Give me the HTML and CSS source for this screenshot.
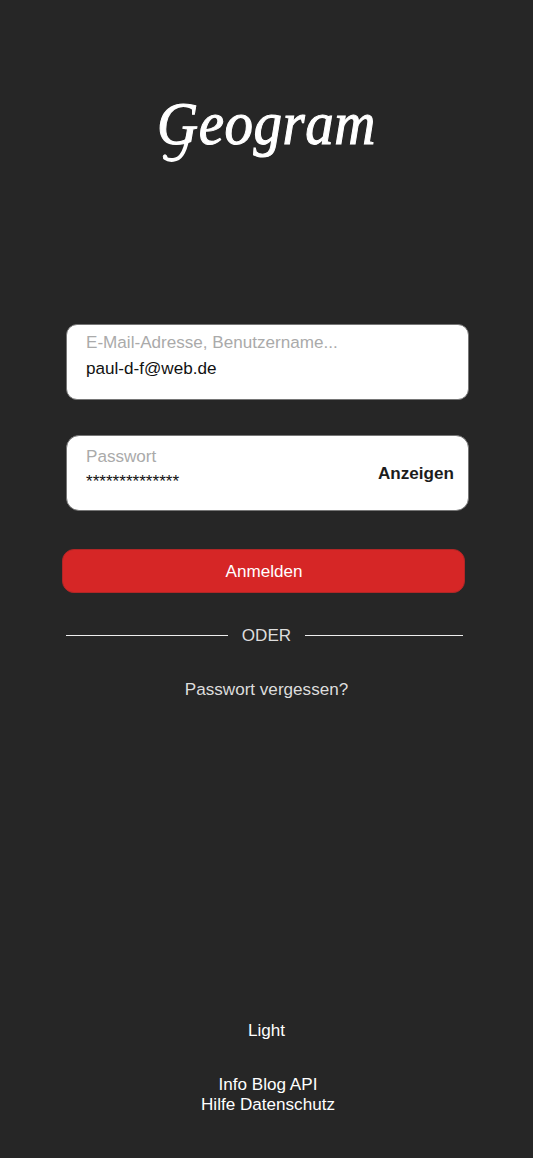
FILE: index.html
```html
<!DOCTYPE html>
<html lang="de">
<head>
<meta charset="utf-8">
<title>Geogram</title>
<link rel="stylesheet" href="styles.css">
</head>
<body>
<main class="login">
  <h1 class="logo"><span class="word">Geogram</span>
    <svg class="swash" width="40" height="40" viewBox="0 0 40 40" fill="none" stroke="#fff" stroke-linecap="round">
      <path d="M31 14C29.500 22 28.500 28 24.500 33C20.500 39 12 39 8 36" stroke-width="3.800"/>
      <circle cx="8" cy="34.500" r="1.700" fill="#fff"/>
    </svg>
  </h1>
  <form class="form">
    <div class="field">
      <div class="entry">
        <span class="label">E-Mail-Adresse, Benutzername...</span>
        <span class="value">paul-d-f@web.de</span>
      </div>
    </div>
    <div class="field password">
      <div class="entry">
        <span class="label">Passwort</span>
        <span class="value">**************</span>
      </div>
      <strong class="show">Anzeigen</strong>
    </div>
    <button class="submit" type="button">Anmelden</button>
    <div class="divider"><span class="line"></span><span class="or">ODER</span><span class="line right"></span></div>
    <a class="forgot">Passwort vergessen?</a>
  </form>
  <footer class="footer">
    <a class="theme">Light</a>
    <nav class="links">Info Blog API<br>Hilfe Datenschutz</nav>
  </footer>
</main>
</body>
</html>
```
FILE: styles.css
```css
* { box-sizing: border-box; }
body {
  margin: 0;
  background: #262626;
  color: #fff;
  font: 17.1px/20px "Liberation Sans", Arial, sans-serif;
}
.login {
  height: 1158px;
  display: flex;
  flex-direction: column;
  align-items: center;
}
.logo {
  position: relative;
  margin: 88px 0 0;
  height: 82px;
  width: 219px;
  font: italic 400 57px/72px "Monotype Corsiva", "Liberation Serif", serif;
  letter-spacing: 0.5px;
  white-space: nowrap;
}
.word {
  display: block;
  transform: scaleY(1.07);
  -webkit-text-stroke: 1px #fff;
}
/* Descending tail of the capital G */
.swash {
  position: absolute;
  left: 0;
  top: 34px;
}
.form {
  width: 403px;
  margin: 154px 0 0 2px;
  display: flex;
  flex-direction: column;
}
.field {
  height: 76px;
  border: 1px solid #767676;
  border-radius: 11px;
  background: #fff;
  padding: 8px 14px 0 19px;
  display: flex;
  justify-content: space-between;
}
.entry {
  display: flex;
  flex-direction: column;
  gap: 6px;
}
.label { color: #aaa; }
.value { color: #111; }
.password {
  margin-top: 35px;
  padding-top: 11px;
  border-radius: 13px;
}
.password .entry { gap: 5px; }
.show {
  margin-top: 17px;
  color: #1c1c1c;
}
.submit {
  width: 403px;
  height: 44px;
  margin: 38px 0 0 -4.5px;
  padding: 2px 0 0 2px;
  border: 1px solid #b02626;
  border-radius: 12px;
  background: #d62626;
  color: #fff;
  font: inherit;
}
.divider {
  margin-top: 33px;
  width: 397px;
  display: flex;
  align-items: center;
  color: #ddd;
}
.line {
  width: 162px;
  height: 1px;
  margin-bottom: 1px;
  background: #eee;
}
.or {
  flex: 1;
  text-align: center;
}
.right { width: 158px; }
.forgot {
  margin: 34px 2px 0 0;
  text-align: center;
  color: #ddd;
}
.footer {
  margin-top: 321px;
  text-align: center;
}
.theme {
  display: block;
}
.links { margin: 34px 0 0 3px; }
```
